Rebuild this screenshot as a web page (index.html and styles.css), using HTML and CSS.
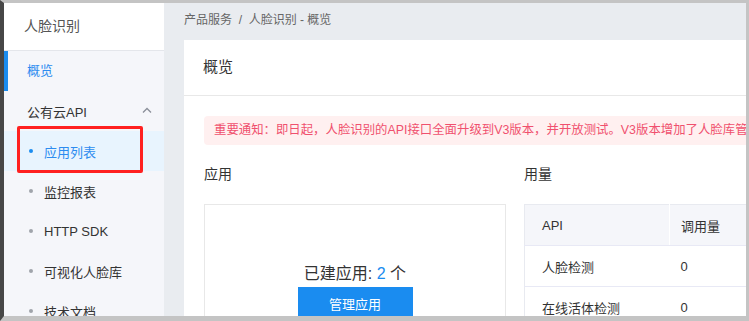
FILE: index.html
```html
<!DOCTYPE html>
<html lang="zh-CN">
<head>
    <meta charset="UTF-8">
    <title>人脸识别 - 概览</title>
    <link rel="stylesheet" href="styles.css">
</head>
<body>
    <div class="window">
        <aside class="sidebar">
            <div class="side-title">人脸识别</div>
            <div class="menu-item active">概览</div>
            <div class="menu-group">
                <span>公有云API</span>
                <svg class="chevron" width="10" height="6" viewBox="0 0 10 6">
                    <path d="M1 5.5 L5 1.5 L9 5.5" fill="none" stroke="#8a8f99" stroke-width="1.3"/>
                </svg>
            </div>
            <div class="sub-item current"><i class="dot"></i>应用列表</div>
            <div class="sub-item"><i class="dot"></i>监控报表</div>
            <div class="sub-item"><i class="dot"></i>HTTP SDK</div>
            <div class="sub-item"><i class="dot"></i>可视化人脸库</div>
            <div class="sub-item"><i class="dot"></i>技术文档</div>
        </aside>

        <main class="main">
            <div class="breadcrumb">产品服务 &nbsp;/&nbsp; 人脸识别 - 概览</div>
            <div class="card">
                <div class="card-head">概览</div>
                <div class="card-body">
                    <div class="notice">重要通知：即日起，人脸识别的API接口全面升级到V3版本，并开放测试。V3版本增加了人脸库管理功能</div>
                    <div class="columns">
                        <section>
                            <h3 class="sec-title">应用</h3>
                            <div class="app-box">
                                <div class="app-count">已建应用: <span class="num">2</span> 个</div>
                                <button class="btn">管理应用</button>
                            </div>
                        </section>
                        <section>
                            <h3 class="sec-title">用量</h3>
                            <table class="usage">
                                <thead>
                                    <tr><th class="c1">API</th><th>调用量</th></tr>
                                </thead>
                                <tbody>
                                    <tr><td class="c1">人脸检测</td><td>0</td></tr>
                                    <tr><td class="c1">在线活体检测</td><td>0</td></tr>
                                </tbody>
                            </table>
                        </section>
                    </div>
                </div>
            </div>
        </main>

        <div class="mark"></div>
    </div>
</body>
</html>
```

FILE: styles.css
```css
* {
    margin: 0;
    padding: 0;
    box-sizing: border-box;
}

body {
    font-family: "Liberation Sans", "Noto Sans CJK SC", sans-serif;
    background: #c4c4c4;
    color: #333;
    width: 749px;
    height: 321px;
    overflow: hidden;
}

.window {
    position: relative;
    width: 749px;
    height: 321px;
    border-top: 3px solid #c4c4c4;
    border-left: 4px solid #474747;
    border-right: 3px solid #c4c4c4;
    border-bottom: 5px solid #c4c4c4;
    display: flex;
    overflow: hidden;
    background: #e9ecf0;
}

/* sidebar */
.sidebar {
    width: 160px;
    flex-shrink: 0;
    background: #f5f6fa;
}

.side-title {
    height: 48px;
    background: #fff;
    border-bottom: 1px solid #e4e6eb;
    padding-left: 20px;
    line-height: 46px;
    font-size: 14px;
    color: #555;
}

.menu-item {
    height: 40px;
    line-height: 40px;
    padding-left: 23px;
    font-size: 13px;
    border-left: 4px solid transparent;
}

.menu-item.active {
    color: #2d8cf0;
    border-left-color: #1a8cf0;
    padding-left: 19px;
}

.menu-group {
    height: 40px;
    display: flex;
    align-items: center;
    justify-content: space-between;
    padding: 0 12px 0 23px;
    font-size: 13px;
}

.chevron {
    margin-top: -2px;
}

.sub-item {
    height: 40px;
    display: flex;
    align-items: center;
    padding-left: 25px;
    font-size: 13px;
}

.dot {
    width: 4px;
    height: 4px;
    border-radius: 50%;
    background: #a0a4ab;
    margin-right: 11px;
}

.sub-item.current {
    background: #e8f4fe;
    color: #2d8cf0;
}

.sub-item.current .dot {
    background: #1a8cf0;
}

/* main */
.main {
    flex: 1;
    padding-left: 20px;
    min-width: 0;
}

.breadcrumb {
    height: 37px;
    line-height: 35px;
    font-size: 12px;
    color: #666;
}

.card {
    background: #fff;
    width: 640px;
    height: 400px;
}

.card-head {
    height: 56px;
    line-height: 54px;
    padding-left: 19px;
    font-size: 15px;
    border-bottom: 1px solid #e8e8e8;
}

.card-body {
    padding: 20px;
}

.notice {
    height: 29px;
    line-height: 29px;
    background: #fff0f0;
    border-radius: 4px;
    padding-left: 10px;
    font-size: 12.4px;
    color: #f0506e;
    white-space: nowrap;
    overflow: hidden;
}

.columns {
    display: grid;
    grid-template-columns: 302px 1fr;
    gap: 18px;
}

.sec-title {
    font-weight: normal;
    font-size: 14px;
    height: 59px;
    line-height: 59px;
}

.app-box {
    border: 1px solid #e8e8e8;
    height: 160px;
    display: flex;
    flex-direction: column;
    align-items: center;
    padding-top: 55px;
}

.app-count {
    font-size: 16px;
    height: 27px;
}

.num {
    color: #1a8cf0;
}

.btn {
    width: 115px;
    height: 32px;
    border: none;
    background: #1a8cf0;
    color: #fff;
    font-family: inherit;
    font-size: 13px;
}

.usage {
    width: 100%;
    border-collapse: collapse;
    border: 1px solid #e8eaf0;
    font-size: 13px;
}

.usage th,
.usage td {
    height: 41px;
    text-align: left;
    font-weight: normal;
    padding-left: 11px;
    border-bottom: 1px solid #e8e9f5;
}

.usage th {
    background: #f5f6fa;
    border-left: 1px solid #fff;
}

.usage .c1 {
    width: 145px;
    padding-left: 17px;
    border-left: none;
}

/* annotation overlay */
.mark {
    position: absolute;
    left: 13px;
    top: 123px;
    width: 126px;
    height: 47px;
    border: 3px solid #ff2020;
    border-radius: 2px;
}
```
